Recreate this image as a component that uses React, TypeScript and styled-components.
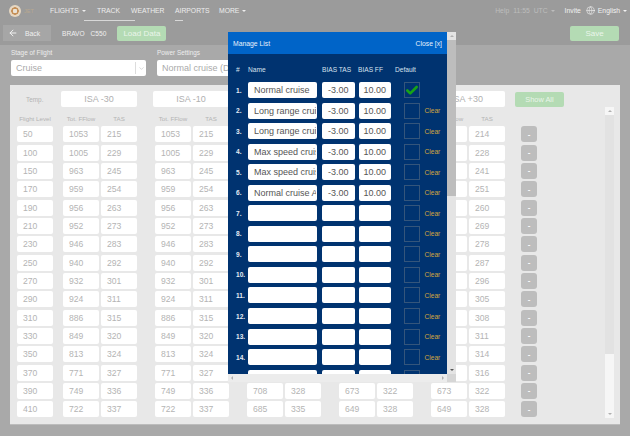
import React from 'react';
import styled, { createGlobalStyle } from 'styled-components';
import { ArrowLeft, Check, ChevronDown, Globe } from 'lucide-react';

const levels = [50, 100, 150, 170, 190, 210, 230, 250, 270, 290, 310, 330, 350, 370, 390, 410];

const fflow = [1053, 1005, 963, 959, 956, 952, 946, 940, 932, 924, 886, 849, 813, 771, 749, 722];
const tas = [215, 229, 245, 254, 263, 273, 283, 292, 301, 311, 315, 320, 324, 327, 336, 337];
const fflowMid = [1010, 965, 925, 920, 915, 910, 905, 900, 890, 880, 845, 810, 775, 735, 708, 685];
const tasMid = [215, 229, 243, 253, 262, 271, 281, 290, 299, 308, 312, 317, 320, 322, 328, 335];
const fflowWarm = [975, 930, 890, 885, 880, 875, 870, 865, 855, 845, 810, 775, 740, 700, 673, 649];
const tasWarm = [214, 228, 241, 251, 260, 269, 278, 287, 296, 305, 308, 311, 314, 316, 322, 328];

const groups = [
  { fflow, tas },
  { fflow, tas },
  { fflow: fflowMid, tas: tasMid },
  { fflow: fflowWarm, tas: tasWarm },
  { fflow: fflowWarm, tas: tasWarm },
];

const temps = ['ISA -30', 'ISA -10', 'ISA', 'ISA +10', 'ISA +30'];

const savedRows = [
  { name: 'Normal cruise', bias: '-3.00', ff: '10.00' },
  { name: 'Long range cruise', bias: '-3.00', ff: '10.00' },
  { name: 'Long range cruise', bias: '-3.00', ff: '10.00' },
  { name: 'Max speed cruise', bias: '-3.00', ff: '10.00' },
  { name: 'Max speed cruise', bias: '-3.00', ff: '10.00' },
  { name: 'Normal cruise A', bias: '-3.00', ff: '10.00' },
];

const modalRows = Array.from({ length: 15 }, (_, i) => savedRows[i] ?? { name: '', bias: '', ff: '' });

const App = () => (
  <>
    <GlobalStyle />
    <Page>
      <TopNav>
        <Brand>
          <LogoMark />
          <LogoText>JET</LogoText>
        </Brand>
        <NavLink $width={47}>
          FLIGHTS <Caret />
        </NavLink>
        <NavLink $width={34} $underline={51} $offset={-13}>
          TRACK
        </NavLink>
        <NavLink $width={44}>WEATHER</NavLink>
        <NavLink $width={44} $underline={8}>
          AIRPORTS
        </NavLink>
        <NavLink $width={30}>
          MORE <Caret />
        </NavLink>
        <NavRight>
          <NavMuted>Help</NavMuted>
          <NavMuted>11:55</NavMuted>
          <NavMuted>
            UTC <Caret />
          </NavMuted>
          <NavBright>Invite</NavBright>
          <NavBright>
            <Globe size={9} strokeWidth={1.6} />
            <span>
              English <Caret />
            </span>
          </NavBright>
        </NavRight>
      </TopNav>

      <SubBar>
        <BackButton>
          <ArrowLeft size={10} strokeWidth={2.4} />
          <span>Back</span>
        </BackButton>
        <Aircraft>BRAVO</Aircraft>
        <Aircraft>C550</Aircraft>
        <LoadButton>Load Data</LoadButton>
        <SaveButton>Save</SaveButton>
      </SubBar>

      <Selectors>
        <Field>
          <FieldLabel>Stage of Flight</FieldLabel>
          <SelectBox>
            <span>Cruise</span>
            <SelectArrow>
              <ChevronDown size={7} strokeWidth={1.5} />
            </SelectArrow>
          </SelectBox>
        </Field>
        <Field>
          <FieldLabel>Power Settings</FieldLabel>
          <SelectBox>
            <span>Normal cruise (D</span>
          </SelectBox>
        </Field>
      </Selectors>

      <Panel>
        <PanelMain>
          <TempRow>
            <TempLabel>Temp.</TempLabel>
            {temps.map((t) => (
              <IsaCell key={t}>{t}</IsaCell>
            ))}
            <ShowAll>Show All</ShowAll>
          </TempRow>
          <Table>
            <LevelGroup>
              <ColHead>Flight Level</ColHead>
              {levels.map((l) => (
                <Cell key={l}>{l}</Cell>
              ))}
            </LevelGroup>
            {groups.map((g, i) => (
              <FuelGroup key={i}>
                <ColHead>Tot. FFlow</ColHead>
                <ColHead>TAS</ColHead>
                {levels.map((l, r) => (
                  <React.Fragment key={l}>
                    <Cell>{g.fflow[r]}</Cell>
                    <Cell>{g.tas[r]}</Cell>
                  </React.Fragment>
                ))}
              </FuelGroup>
            ))}
            <ActionGroup>
              <ColHead />
              {levels.map((l) => (
                <RemoveButton key={l}>-</RemoveButton>
              ))}
            </ActionGroup>
          </Table>
        </PanelMain>
        <PanelScroll>
          <ScrollArrow $dir="up" />
          <PanelThumb />
          <ScrollArrow $dir="down" />
        </PanelScroll>
      </Panel>

      <Modal>
        <ModalTop>
          <ModalContent>
            <ModalHeader>
              <span>Manage List</span>
              <span>Close [x]</span>
            </ModalHeader>
            <ModalBody>
              <ModalHeadRow>
                <span>#</span>
                <span>Name</span>
                <span>BIAS TAS</span>
                <span>BIAS FF</span>
                <DefaultHead>Default</DefaultHead>
              </ModalHeadRow>
              {modalRows.map((row, i) => (
                <ModalRow key={i}>
                  <RowNumber>{i < 14 && `${i + 1}.`}</RowNumber>
                  <ModalInput readOnly value={row.name} />
                  <ModalInput readOnly value={row.bias} $center />
                  <ModalInput readOnly value={row.ff} $center />
                  <DefaultBox>{i === 0 && <Check size={15} strokeWidth={4.6} color="#17a317" />}</DefaultBox>
                  {i > 0 && i < 14 && <ClearLink>Clear</ClearLink>}
                </ModalRow>
              ))}
            </ModalBody>
          </ModalContent>
          <ModalVScroll>
            <ScrollArrow $dir="up" />
            <ModalThumb />
            <ScrollArrow $dir="down" $dark />
          </ModalVScroll>
        </ModalTop>
        <ModalBottom>
          <ModalHScroll>
            <ScrollArrow $dir="left" />
            <ScrollArrow $dir="right" />
          </ModalHScroll>
          <ScrollCorner />
        </ModalBottom>
      </Modal>
    </Page>
  </>
);

export default App;

const GlobalStyle = createGlobalStyle`
  html, body {
    margin: 0;
    padding: 0;
    background: #a9a9a9;
  }
  * {
    box-sizing: border-box;
  }
  body {
    font-family: "Liberation Sans", Arial, sans-serif;
  }
`;

const Page = styled.div`
  position: relative;
  width: 630px;
  height: 436px;
  overflow: hidden;
  background: #a9a9a9;
`;

const TopNav = styled.nav`
  display: flex;
  align-items: center;
  height: 21px;
  padding: 0 3px 0 9px;
  background: #9b9b9b;
  font-size: 6.8px;
`;

const Brand = styled.div`
  display: flex;
  align-items: center;
  gap: 3px;
  width: 41px;
`;

const LogoMark = styled.div`
  width: 12px;
  height: 12px;
  border-radius: 50%;
  background: radial-gradient(circle, #e9e2d6 0 2px, #c58f57 2.5px 3.5px, #e6d7c2 4px 6px);
`;

const LogoText = styled.span`
  font-size: 5.5px;
  color: #b8a88f;
`;

const NavLink = styled.span<{ $width: number; $underline?: number; $offset?: number }>`
  position: relative;
  width: ${(p) => p.$width}px;
  color: #eeeeee;
  white-space: nowrap;

  ${(p) =>
    p.$underline
      ? `&::after {
    content: '';
    position: absolute;
    left: ${p.$offset ?? 0}px;
    top: 13px;
    width: ${p.$underline}px;
    height: 1px;
    background: #d8d8d8;
  }`
      : ''}
`;

const Caret = styled.i`
  display: inline-block;
  margin-left: 1px;
  vertical-align: 1px;
  border-top: 2px solid currentColor;
  border-left: 2px solid transparent;
  border-right: 2px solid transparent;
`;

const NavRight = styled.div`
  display: flex;
  align-items: center;
  gap: 4px;
  margin-left: auto;
`;

const NavMuted = styled.span`
  color: #bdbdbd;
  white-space: nowrap;
`;

const NavBright = styled.span`
  display: flex;
  align-items: center;
  gap: 3px;
  margin-left: 6px;
  color: #f2f2f2;
  white-space: nowrap;

  & + & {
    margin-left: 1px;
  }
`;

const SubBar = styled.div`
  display: flex;
  align-items: center;
  height: 24px;
  padding: 0 11px 0 3px;
  background: #9b9b9b;
`;

const BackButton = styled.div`
  display: flex;
  align-items: center;
  gap: 7px;
  width: 48px;
  height: 16px;
  padding-left: 5px;
  margin-right: 11px;
  background: #a6a6a6;
  color: #f0f0f0;
  font-size: 6.8px;
`;

const Aircraft = styled.span`
  margin-right: 6px;
  color: #efefef;
  font-size: 6.6px;
`;

const LoadButton = styled.div`
  display: flex;
  align-items: center;
  justify-content: center;
  width: 49px;
  height: 15px;
  margin-left: 5px;
  border-radius: 2px;
  background: #b4dbb4;
  color: #eaf5ea;
  font-size: 8px;
`;

const SaveButton = styled(LoadButton)`
  margin-left: auto;
`;

const Selectors = styled.div`
  display: flex;
  gap: 11px;
  height: 40px;
  padding: 4px 0 0 11px;
`;

const Field = styled.div`
  width: 135px;
`;

const FieldLabel = styled.div`
  height: 11px;
  color: #eeeeee;
  font-size: 6.4px;
  line-height: 8px;
`;

const SelectBox = styled.div`
  position: relative;
  display: flex;
  align-items: center;
  height: 16px;
  padding-left: 5px;
  border-radius: 2px;
  background: #ffffff;
  color: #aaaaaa;
  font-size: 9px;
  white-space: nowrap;
  overflow: hidden;
`;

const SelectArrow = styled.div`
  display: flex;
  align-items: center;
  justify-content: center;
  position: absolute;
  right: 0;
  top: 2px;
  width: 11px;
  height: 12px;
  border-left: 1px solid #dddddd;
  color: #aaaaaa;
`;

const Panel = styled.section`
  display: flex;
  width: 610px;
  height: 340px;
  margin-left: 10px;
  border-bottom: 1px solid #bcbcbc;
  background: #e8e8e8;
`;

const PanelMain = styled.div`
  flex: 1;
  padding: 6px 0 0 7px;
`;

const TempRow = styled.div`
  display: flex;
  align-items: center;
  height: 16px;
`;

const TempLabel = styled.div`
  width: 44px;
  padding-left: 9px;
  color: #b4b4b4;
  font-size: 6.4px;
`;

const IsaCell = styled.div`
  display: flex;
  align-items: center;
  justify-content: center;
  width: 76px;
  height: 16px;
  margin-right: 16px;
  border-radius: 2px;
  background: #ffffff;
  color: #b0b0b0;
  font-size: 9px;

  &:nth-child(6) {
    margin-right: 10px;
  }
`;

const ShowAll = styled.div`
  display: flex;
  align-items: center;
  justify-content: center;
  width: 49px;
  height: 15px;
  border-radius: 2px;
  background: #b4dbb4;
  color: #eaf5ea;
  font-size: 7.4px;
`;

const Table = styled.div`
  display: flex;
  margin-top: 5px;
`;

const LevelGroup = styled.div`
  display: grid;
  grid-template-columns: 36px;
  grid-template-rows: 12px repeat(16, 16px);
  row-gap: 2.33px;
  margin-right: 10px;
`;

const FuelGroup = styled.div`
  display: grid;
  grid-template-columns: 36px 36px;
  grid-template-rows: 12px repeat(16, 16px);
  column-gap: 2px;
  row-gap: 2.33px;
  margin-right: 18px;
`;

const ActionGroup = styled.div`
  display: grid;
  grid-template-columns: 16px;
  grid-template-rows: 12px repeat(16, 16px);
  row-gap: 2.33px;
  margin-left: -2px;
`;

const ColHead = styled.div`
  display: flex;
  align-items: center;
  justify-content: center;
  color: #b4b4b4;
  font-size: 6.2px;
  white-space: nowrap;
`;

const Cell = styled.div`
  display: flex;
  align-items: center;
  padding-left: 6px;
  border-radius: 2px;
  background: #ffffff;
  color: #b4b4b4;
  font-size: 8.6px;
`;

const RemoveButton = styled.div`
  display: flex;
  align-items: center;
  justify-content: center;
  border-radius: 3px;
  background: #bdbdbd;
  color: #ffffff;
  font-size: 8px;
  font-weight: bold;
`;

const PanelScroll = styled.div`
  display: flex;
  flex-direction: column;
  width: 9px;
  height: 311px;
  margin: 22px 6px 0 0;
  background: #f6f6f6;
`;

const PanelThumb = styled.div`
  flex: 1;
  margin-bottom: 56px;
  background: #e2e2e2;
`;

const ScrollArrow = styled.i<{ $dir: 'up' | 'down' | 'left' | 'right'; $dark?: boolean }>`
  display: flex;
  align-items: center;
  justify-content: center;
  flex: none;
  width: ${(p) => (p.$dir === 'left' || p.$dir === 'right' ? '8px' : 'auto')};
  height: ${(p) => (p.$dir === 'left' || p.$dir === 'right' ? 'auto' : '8px')};

  &::before {
    content: '';
    width: 0;
    height: 0;
    border: 2px solid transparent;
    ${(p) => {
      const color = p.$dark ? '#555555' : '#b0b0b0';
      if (p.$dir === 'up') return `border-bottom-color: ${color}; border-top-width: 0;`;
      if (p.$dir === 'down') return `border-top-color: ${color}; border-bottom-width: 0;`;
      if (p.$dir === 'left') return `border-right-color: ${color}; border-left-width: 0;`;
      return `border-left-color: ${color}; border-right-width: 0;`;
    }}
  }
`;

const Modal = styled.div`
  position: absolute;
  left: 228px;
  top: 32px;
  display: flex;
  flex-direction: column;
  width: 228px;
  height: 350px;
`;

const ModalTop = styled.div`
  display: flex;
  height: 342px;
`;

const ModalContent = styled.div`
  width: 219px;
  overflow: hidden;
  background: #003370;
`;

const ModalHeader = styled.header`
  display: flex;
  align-items: center;
  justify-content: space-between;
  height: 22px;
  padding: 0 5px;
  background: #0064c8;
  color: #e8f1fb;
  font-size: 6.8px;
`;

const ModalBody = styled.div`
  padding: 0 0 0 8px;
`;

const ModalHeadRow = styled.div`
  display: grid;
  grid-template-columns: 12px 74px 36px 37px auto;
  align-items: center;
  height: 28px;
  padding-top: 3px;
  color: #d8e2ee;
  font-size: 6.6px;
`;

const DefaultHead = styled.span`
  white-space: nowrap;
`;

const ModalRow = styled.div`
  display: flex;
  align-items: center;
  height: 16px;
  margin-bottom: 4.55px;
`;

const RowNumber = styled.span`
  width: 12px;
  color: #e6ecf4;
  font-size: 6.6px;
  font-weight: bold;
`;

const ModalInput = styled.input<{ $center?: boolean }>`
  width: ${(p) => (p.$center ? '32.5px' : '69px')};
  height: 16px;
  margin-right: ${(p) => (p.$center ? '4px' : '5px')};
  padding: ${(p) => (p.$center ? '0' : '0 1px 0 6px')};
  border: 0;
  border-radius: 2px;
  background: #ffffff;
  color: #555555;
  font-family: inherit;
  font-size: 9px;
  text-align: ${(p) => (p.$center ? 'center' : 'left')};
  outline: none;
`;

const DefaultBox = styled.div`
  display: flex;
  align-items: center;
  justify-content: center;
  width: 16px;
  height: 16px;
  margin-left: 8.5px;
  border: 1px solid #34557b;
`;

const ClearLink = styled.span`
  margin-left: 5px;
  color: #d0a63f;
  font-size: 6.6px;
`;

const ModalVScroll = styled.div`
  display: flex;
  flex-direction: column;
  width: 9px;
  background: #e4e4e4;
`;

const ModalThumb = styled.div`
  flex: 1;
  margin-bottom: 170px;
  background: #bdbdbd;
`;

const ModalBottom = styled.div`
  display: flex;
  height: 8px;
`;

const ModalHScroll = styled.div`
  display: flex;
  justify-content: space-between;
  width: 219px;
  background: #ececec;
`;

const ScrollCorner = styled.div`
  width: 9px;
  background: #d6d6d6;
`;
